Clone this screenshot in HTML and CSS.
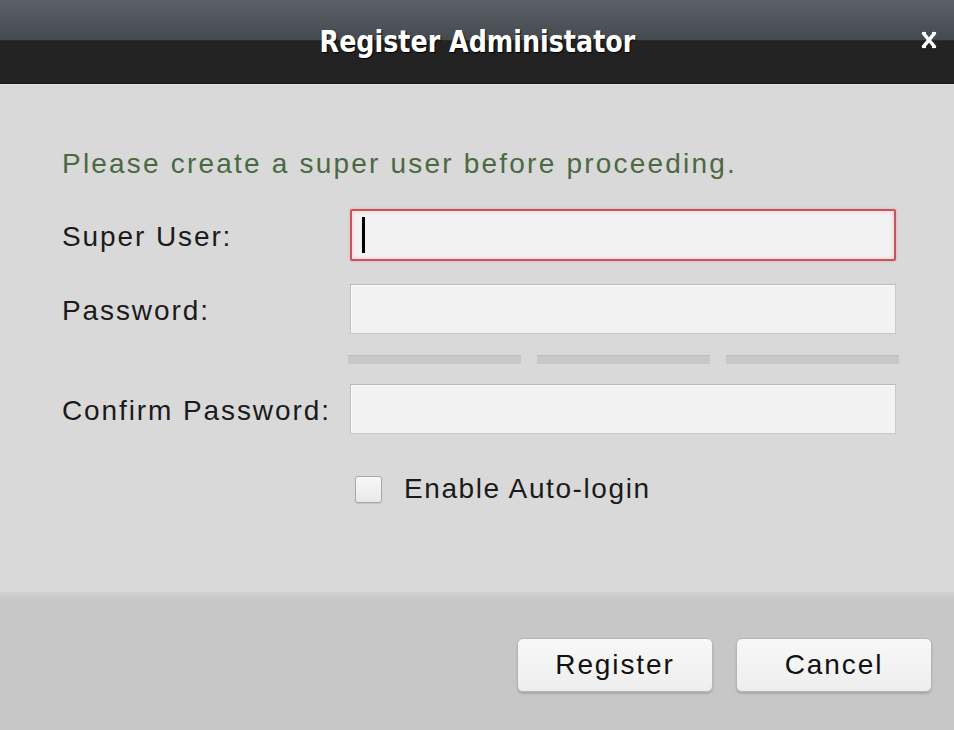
FILE: index.html
```html
<!DOCTYPE html>
<html lang="en">
<head>
<meta charset="UTF-8">
  <title>Register Administator</title>
  <link rel="stylesheet" href="styles.css">
</head>
<body>
  <div class="dialog">
    <div class="titlebar">
      <span class="title">Register Administator</span>
      <span class="close">
        <svg width="18" height="20" viewBox="0 0 18 20">
          <path d="M4 4 L14 16 M14 4 L4 16" stroke="#ffffff" stroke-width="3.5" stroke-linecap="square" fill="none"/>
          <path d="M2 3 H6 M12 3 H16 M2 17 H6 M12 17 H16" stroke="#ffffff" stroke-width="2" fill="none"/>
        </svg>
      </span>
    </div>

    <div class="content">
      <p class="message">Please create a super user before proceeding.</p>

      <div class="form">
        <label class="label">Super User:</label>
        <div class="field active"><span class="caret"></span></div>

        <label class="label">Password:</label>
        <div class="field"></div>

        <span></span>
        <div class="strength">
          <span class="bar"></span>
          <span class="bar"></span>
          <span class="bar"></span>
        </div>

        <label class="label">Confirm Password:</label>
        <div class="field"></div>

        <span></span>
        <div class="auto-login">
          <span class="checkbox"></span>
          <span class="check-text">Enable Auto-login</span>
        </div>
      </div>
    </div>

    <div class="footer">
      <button class="btn">Register</button>
      <button class="btn">Cancel</button>
    </div>
  </div>
</body>
</html>
```

FILE: styles.css
```css
html, body {
  margin: 0;
  padding: 0;
}
body {
  font-family: "Liberation Sans", Arial, sans-serif;
  background-color: #dad9da;
}
.dialog {
  width: 954px;
  height: 730px;
  display: flex;
  flex-direction: column;
  overflow: hidden;
}

/* 标题栏 */
.titlebar {
  height: 83px;
  border-bottom: 1px solid #151515;
  background: linear-gradient(to bottom, #5c6068 0%, #454950 48%, #232323 49%, #222222 100%);
  display: flex;
  align-items: center;
  justify-content: center;
  position: relative;
}
.title {
  display: inline-block;
  font-family: "DejaVu Sans Condensed", "DejaVu Sans", sans-serif;
  font-stretch: condensed;
  font-weight: bold;
  font-size: 31px;
  color: #ffffff;
  text-shadow: 1px 1px 1px #000;
  margin-top: -2px;
  transform: scaleX(0.91); /* 标题字体较窄 */
}
.close {
  position: absolute;
  right: 16px;
  top: 30px;
}

/* 内容区 */
.content {
  flex: 1;
  padding: 59px 58px 0 62px;
  border-top: 1px solid #e6e6e6;
}
.message {
  margin: 0;
  height: 40px;
  line-height: 40px;
  font-size: 28px;
  letter-spacing: 2.2px;
  color: #4a6a42;
}
.form {
  margin-top: 25px;
  display: grid;
  grid-template-columns: 288px 546px;
  row-gap: 23px;
  align-items: center;
}
.label {
  padding-top: 4px;
  font-size: 28px;
  letter-spacing: 1.9px;
  color: #1b1b1b;
}
.field {
  height: 50px;
  box-sizing: border-box;
  background-color: #f3f2f3;
  border: 1px solid #c9c9c9;
  border-top-color: #b9b9b9;
  border-left-color: #bdbdbd;
  box-shadow: inset 1px 1px 0 #fafafa;
  position: relative;
}
.field.active {
  height: 52px;
  border: 2px solid #c2585e;
  border-radius: 2px;
  box-shadow: 0 0 3px #e8a3a8, inset 0 0 4px #f1c4c7;
}
.caret {
  position: absolute;
  left: 10px;
  top: 6px;
  width: 3px;
  height: 36px;
  background-color: #000;
}
.strength {
  margin: -2px 0 -3px -2px;
  width: 551px;
  display: flex;
  gap: 16px;
}
.bar {
  flex: 1;
  height: 9px;
  background-color: #c9c8c9;
  border-top: 1px solid #bdbdbd;
  box-sizing: border-box;
}
.auto-login {
  margin-top: 16px;
  display: flex;
  align-items: center;
  padding-left: 5px;
}
.checkbox {
  width: 27px;
  height: 27px;
  box-sizing: border-box;
  border: 1px solid #a9a9a9;
  border-radius: 3px;
  background: linear-gradient(to bottom, #f7f7f7, #e9e9e9);
  box-shadow: 0 1px 1px #c2c2c2;
}
.check-text {
  margin-left: 22px;
  font-size: 28px;
  letter-spacing: 1.6px;
  color: #1b1b1b;
}

/* 底部按钮 */
.footer {
  height: 138px;
  box-sizing: border-box;
  background: linear-gradient(to bottom, #d3d2d3 0px, #c8c7c8 8px, #c8c7c8 100%);
  display: flex;
  justify-content: flex-end;
  align-items: flex-start;
  padding: 46px 22px 0 0;
  gap: 23px;
}
.btn {
  width: 196px;
  height: 54px;
  font-family: "Liberation Sans", Arial, sans-serif;
  font-size: 28px;
  letter-spacing: 1.9px;
  color: #111;
  background: linear-gradient(to bottom, #f8f8f8, #eeeeee);
  border: 1px solid #b5b5b5;
  border-radius: 6px;
  box-shadow: 0 2px 2px #a9a9a9;
  cursor: pointer;
}
```
